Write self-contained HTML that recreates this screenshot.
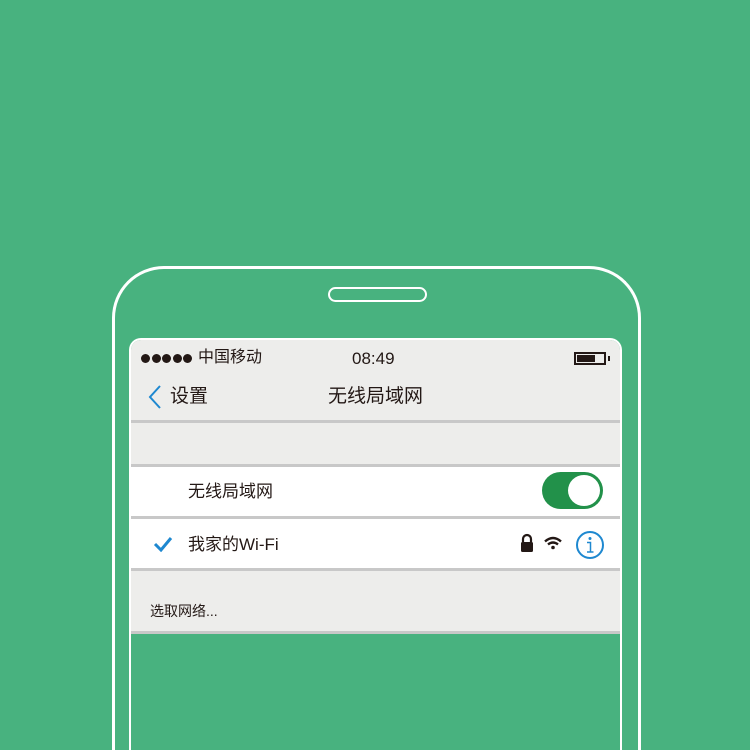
<!DOCTYPE html>
<html><head><meta charset="utf-8"><style>
html,body{margin:0;width:750px;height:750px;overflow:hidden}
body{background:#48b27f;font-family:"Liberation Sans","Noto Sans CJK SC",sans-serif;color:#231815}
#w{position:relative;width:750px;height:750px;overflow:hidden}
.a{position:absolute;line-height:1}
.d{display:inline-block;width:9px;height:9px;border-radius:50%;background:#231815;margin-right:1.5px;vertical-align:top}
</style></head><body><div id="w">
<div class="a" style="left:112px;top:266px;width:523px;height:484px;border:3px solid #fff;border-bottom:0;border-radius:52px 52px 0 0;box-sizing:border-box;width:529px"></div>
<div class="a" style="left:328px;top:287px;width:95px;height:11px;border:2.5px solid #fff;border-radius:8px"></div>
<div class="a" style="left:129px;top:338px;width:489px;height:410px;border:2px solid #fff;border-bottom:0;border-radius:12px 12px 0 0;background:#48b27f;overflow:hidden">
 <div class="a" style="left:0;top:0;width:489px;height:294px;background:#ededeb"></div>
 <div class="a" style="left:10px;top:14px;height:9px"><span class="d"></span><span class="d"></span><span class="d"></span><span class="d"></span><span class="d"></span></div>
 <div class="a" style="left:67px;top:10px;font-size:16px">中国移动</div>
 <div class="a" style="left:221px;top:10px;font-size:17px">08:49</div>
 <div class="a" style="left:443px;top:12px;width:32px;height:13px;border:2px solid #231815;box-sizing:border-box"></div>
 <div class="a" style="left:446px;top:15px;width:18px;height:7px;background:#231815"></div>
 <div class="a" style="left:477px;top:16px;width:2px;height:5px;background:#231815"></div>
 <svg class="a" style="left:16px;top:44px" width="16" height="26"><path d="M13 2 L3 13 L13 24" fill="none" stroke="#1e88d0" stroke-width="2"/></svg>
 <div class="a" style="left:39px;top:47px;font-size:19px">设置</div>
 <div class="a" style="left:197px;top:47px;font-size:19px">无线局域网</div>
 <div class="a" style="left:0;top:80px;width:489px;height:3px;background:#c8c8c8"></div>
 <div class="a" style="left:0;top:124px;width:489px;height:3px;background:#c8c8c8"></div>
 <div class="a" style="left:0;top:127px;width:489px;height:49px;background:#fff"></div>
 <div class="a" style="left:57px;top:143px;font-size:17px">无线局域网</div>
 <div class="a" style="left:411px;top:132px;width:61px;height:37px;border-radius:19px;background:#22914a"></div>
 <div class="a" style="left:437px;top:135px;width:32px;height:31px;border-radius:50%;background:#fff"></div>
 <div class="a" style="left:0;top:176px;width:489px;height:3px;background:#c8c8c8"></div>
 <div class="a" style="left:0;top:179px;width:489px;height:49px;background:#fff"></div>
 <svg class="a" style="left:22px;top:196px" width="20" height="16"><path d="M2 8 L8 14 L18 2" fill="none" stroke="#1e88d0" stroke-width="3"/></svg>
 <div class="a" style="left:57px;top:196px;font-size:17px">我家的Wi-Fi</div>
 <svg class="a" style="left:388px;top:193px" width="16" height="20"><path d="M4 9 V6 a4 4 0 0 1 8 0 V9" fill="none" stroke="#231815" stroke-width="2.2"/><rect x="2" y="9" width="12" height="10" rx="1.5" fill="#231815"/></svg>
 <svg class="a" style="left:412px;top:196px" width="20" height="14"><path d="M2 5.5 Q10 -1.5 18 5.5" fill="none" stroke="#231815" stroke-width="2.4"/><path d="M5 8.5 Q10 4.5 15 8.5" fill="none" stroke="#231815" stroke-width="2.4"/><circle cx="10" cy="11.5" r="1.8" fill="#231815"/></svg>
 <svg class="a" style="left:444px;top:190px" width="30" height="30"><circle cx="15" cy="15" r="13" fill="none" stroke="#1e88d0" stroke-width="2"/><circle cx="15" cy="8.5" r="1.5" fill="#1e88d0"/><path d="M12 12.5 H15.5 V21.5 M12 22 H18.5" fill="none" stroke="#1e88d0" stroke-width="1.5"/></svg>
 <div class="a" style="left:0;top:228px;width:489px;height:3px;background:#c8c8c8"></div>
 <div class="a" style="left:19px;top:264px;font-size:14px">选取网络...</div>
 <div class="a" style="left:0;top:291px;width:489px;height:3px;background:#c8c8c8"></div>
</div>
</div></body></html>
